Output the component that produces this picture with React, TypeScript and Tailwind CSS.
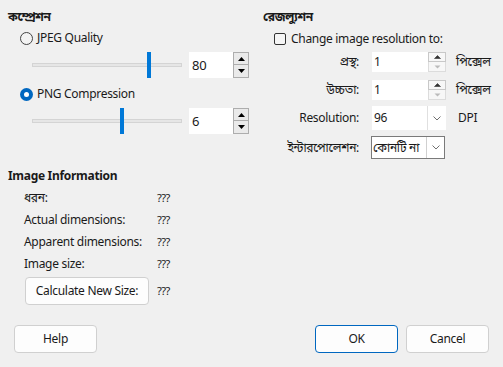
import React from "react";

const FONT = {
  fontFamily:
    '"Segoe UI", "Noto Sans", "Noto Sans Bengali", "Lohit Bengali", "FreeSans", sans-serif',
};

export default function App() {
  return (
    <div
      className="w-[503px] h-[367px] bg-[#f0f0f0] text-[12px] leading-[16px] tracking-[-0.3px] text-[#1a1a1a] relative overflow-hidden"
      style={FONT}
    >
      <div className="flex pt-[9px]">
        {/* left column: compression */}
        <div className="w-[255px] pl-[8px]">
          <div className="font-bold">কম্প্রেশন</div>

          <Radio checked={false} label="JPEG Quality" className="mt-[5px]" />
          <SliderRow value="80" pos={115} className="mt-[6px]" />

          <Radio checked label="PNG Compression" className="mt-[8px]" />
          <SliderRow value="6" pos={88} className="mt-[6px]" />

          {/* image information */}
          <div className="font-bold mt-[34px]">Image Information</div>
          <div className="pl-[16px] mt-[3px] flex flex-col">
            <InfoRow label="ধরন:" />
            <InfoRow label="Actual dimensions:" />
            <InfoRow label="Apparent dimensions:" />
            <InfoRow label="Image size:" />
            <div className="flex items-center mt-[2px]">
              <button className="w-[124px] h-[28px] ml-[1px] bg-[#fdfdfd] border border-[#d0d0d0] rounded-[4px]">
                Calculate New Size:
              </button>
              <span className="ml-[8px] text-[11px] tracking-[-0.5px]">???</span>
            </div>
          </div>
        </div>

        {/* right column: resolution */}
        <div className="pl-[8px] flex-1">
          <div className="font-bold">রেজল্যুশন</div>
          <label className="flex items-center mt-[6px] ml-[11px]">
            <span className="w-[12px] h-[12px] border border-[#333] rounded-[2px] bg-[#f5f5f5]" />
            <span className="ml-[5px]">Change image resolution to:</span>
          </label>

          <div className="grid grid-cols-[96px_74px_auto] gap-x-[13px] items-center mt-[5px]">
            <FieldLabel>প্রস্থ:</FieldLabel>
            <SmallSpin value="1" />
            <span className="ml-[-3px]">পিক্সেল</span>

            <div className="h-[8px] col-span-3" />

            <FieldLabel>উচ্চতা:</FieldLabel>
            <SmallSpin value="1" />
            <span className="ml-[-3px]">পিক্সেল</span>

            <div className="h-[6px] col-span-3" />

            <FieldLabel>Resolution:</FieldLabel>
            <div className="h-[24px] flex bg-white">
              <div className="flex-1 pl-[2px] flex items-center">96</div>
              <div className="w-[19px] border-l border-[#e0e0e0] flex items-center justify-center">
                <Chevron />
              </div>
            </div>
            <span className="ml-[-1px]">DPI</span>

            <div className="h-[6px] col-span-3" />

            <FieldLabel>ইন্টারপোলেশন:</FieldLabel>
            <div className="h-[23px] flex bg-white border border-[#7a7a7a] ml-[-1px] w-[74px]">
              <div className="flex-1 pl-[1px] flex items-center whitespace-nowrap overflow-hidden">
                কোনটি না
              </div>
              <div className="w-[18px] border-l border-[#d0d0d0] flex items-center justify-center">
                <Chevron />
              </div>
            </div>
            <span />
          </div>
        </div>
      </div>

      {/* bottom buttons */}
      <div className="absolute left-[14px] right-[14px] top-[325px] flex">
        <DialogButton>Help</DialogButton>
        <div className="flex-1" />
        <DialogButton primary>OK</DialogButton>
        <div className="w-[8px]" />
        <DialogButton>Cancel</DialogButton>
      </div>
    </div>
  );
}

function Radio({
  checked,
  label,
  className = "",
}: {
  checked: boolean;
  label: string;
  className?: string;
}) {
  return (
    <div className={`flex items-center ml-[12px] ${className}`}>
      {checked ? (
        <span className="w-[13px] h-[13px] rounded-full bg-[#0067c0] flex items-center justify-center">
          <span className="w-[5px] h-[5px] rounded-full bg-white" />
        </span>
      ) : (
        <span className="w-[13px] h-[13px] rounded-full border border-[#444] bg-[#f3f3f3]" />
      )}
      <span className="ml-[4px]">{label}</span>
    </div>
  );
}

function SliderRow({
  value,
  pos,
  className = "",
}: {
  value: string;
  pos: number;
  className?: string;
}) {
  return (
    <div className={`flex items-center h-[26px] ${className}`}>
      <div className="relative w-[150px] h-[26px] ml-[24px]">
        <div className="absolute left-0 right-0 top-[11px] h-[4px] bg-[#e6e6e6] border border-[#d4d4d4]" />
        <div
          className="absolute top-0 w-[4px] h-[26px] bg-[#0078d7]"
          style={{ left: pos }}
        />
      </div>
      <div className="ml-[7px] flex h-[26px]">
        <div className="w-[44px] bg-white flex items-center pl-[3px] text-[13px]">
          {value}
        </div>
        <div className="w-[16px] flex flex-col bg-[#f0f0f0]">
          <div className="h-[13px] border border-[#adadad] flex items-center justify-center bg-[#eaeaea]">
            <Tri up />
          </div>
          <div className="h-[13px] border border-t-0 border-[#adadad] flex items-center justify-center bg-[#eaeaea]">
            <Tri />
          </div>
        </div>
      </div>
    </div>
  );
}

function Tri({ up = false, color = "#000" }: { up?: boolean; color?: string }) {
  return (
    <svg width="7" height="4" viewBox="0 0 7 4">
      {up ? (
        <polygon points="0,4 7,4 3.5,0" fill={color} />
      ) : (
        <polygon points="0,0 7,0 3.5,4" fill={color} />
      )}
    </svg>
  );
}

function SmallSpin({ value }: { value: string }) {
  return (
    <div className="h-[20px] flex bg-white">
      <div className="flex-1 pl-[2px] flex items-center">{value}</div>
      <div className="w-[18px] flex flex-col bg-[#f0f0f0]">
        <div className="h-[10px] border border-[#c8c8c8] bg-[#f7f7f7] flex items-center justify-center">
          <svg width="7" height="4" viewBox="0 0 7 4">
            <polygon points="0.5,3.5 6.5,3.5 3.5,0.5" fill="#333" stroke="#333" strokeWidth="0.6" />
          </svg>
        </div>
        <div className="h-[10px] border border-t-0 border-[#dcdcdc] bg-[#f7f7f7] flex items-center justify-center">
          <svg width="7" height="4" viewBox="0 0 7 4">
            <polygon points="0.5,0.5 6.5,0.5 3.5,3.5" fill="#bbb" />
          </svg>
        </div>
      </div>
    </div>
  );
}

function Chevron() {
  return (
    <svg width="8" height="5" viewBox="0 0 8 5">
      <polyline points="0.5,0.5 4,4 7.5,0.5" fill="none" stroke="#707070" strokeWidth="1" />
    </svg>
  );
}

function FieldLabel({ children }: { children: React.ReactNode }) {
  return <div className="text-right whitespace-nowrap">{children}</div>;
}

function InfoRow({ label }: { label: string }) {
  return (
    <div className="flex h-[22px] items-center">
      <span className="w-[133px]">{label}</span>
      <span className="text-[11px] tracking-[-0.5px]">???</span>
    </div>
  );
}

function DialogButton({
  children,
  primary = false,
}: {
  children: React.ReactNode;
  primary?: boolean;
}) {
  return (
    <button
      className={`w-[83px] h-[28px] rounded-[4px] bg-[#fdfdfd] border ${
        primary ? "border-[#0067c0]" : "border-[#d0d0d0]"
      }`}
    >
      {children}
    </button>
  );
}
